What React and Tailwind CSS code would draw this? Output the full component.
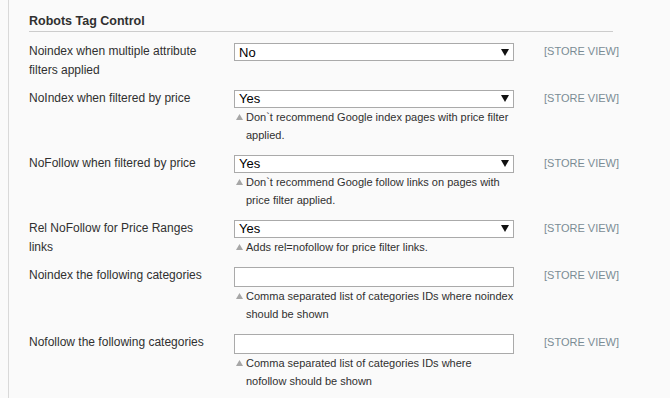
import React from 'react';

const rows = [
    { label: 'Noindex when multiple attribute filters applied', type: 'select', value: 'No', note: null },
    { label: 'NoIndex when filtered by price', type: 'select', value: 'Yes', note: 'Don`t recommend Google index pages with price filter applied.' },
    { label: 'NoFollow when filtered by price', type: 'select', value: 'Yes', note: 'Don`t recommend Google follow links on pages with price filter applied.' },
    { label: 'Rel NoFollow for Price Ranges links', type: 'select', value: 'Yes', note: 'Adds rel=nofollow for price filter links.' },
    { label: 'Noindex the following categories', type: 'input', value: '', note: 'Comma separated list of categories IDs where noindex should be shown' },
    { label: 'Nofollow the following categories', type: 'input', value: '', note: 'Comma separated list of categories IDs where nofollow should be shown' },
];

const Field = ({ row }) => {
    if (row.type === 'select') {
        return (
            <div className="mt-[1px] w-[280px] h-[18px] bg-white border border-[#aaaaaa] flex items-center justify-between pl-[4px] pr-[3px]">
                <span className="text-[13px] leading-none text-black">{row.value}</span>
                <svg width="8" height="7" viewBox="0 0 8 7" className="mr-[1px]">
                    <path d="M0 0 H8 L4 7 Z" fill="#111" />
                </svg>
            </div>
        );
    }
    return <div className="mt-[1px] w-[280px] h-[20px] bg-white border border-[#aaaaaa]" />;
};

const App = () => {
    return (
        <div className="w-[670px] h-[398px] bg-[#fafafa] overflow-hidden" style={{ fontFamily: '"Liberation Sans", Arial, sans-serif' }}>
            <div className="ml-[8px] h-full border-l border-[#d9d9d9] pl-[20px]">
                {/* judul seksi */}
                <div className="w-[584px] pt-[13px] pb-[2px] border-b border-[#cccccc]">
                    <h2 className="text-[12.5px] leading-[16px] font-bold text-[#303030]">Robots Tag Control</h2>
                </div>

                <div className="mt-[10px]">
                    {rows.map((row, i) => (
                        <div key={i} className="grid grid-cols-[205px_310px_1fr] pb-[10px] items-start">
                            <div className="pr-[15px] -mb-[1.5px] text-[12px] leading-[19px] text-[#303030]">{row.label}</div>
                            <div>
                                <Field row={row} />
                                {row.note && (
                                    <div className="flex w-[280px] text-[11px] leading-[18px] text-[#303030]">
                                        <svg width="7" height="6" viewBox="0 0 7 6" className="mt-[6px] ml-[2px] mr-[3px] shrink-0">
                                            <path d="M0 6 L3.5 0 L7 6 Z" fill="#a6a6a6" />
                                        </svg>
                                        <span>{row.note}</span>
                                    </div>
                                )}
                            </div>
                            <div className="text-[11px] leading-[19px] text-[#7a8c95]">[STORE VIEW]</div>
                        </div>
                    ))}
                </div>
            </div>
        </div>
    );
};

export default App;
